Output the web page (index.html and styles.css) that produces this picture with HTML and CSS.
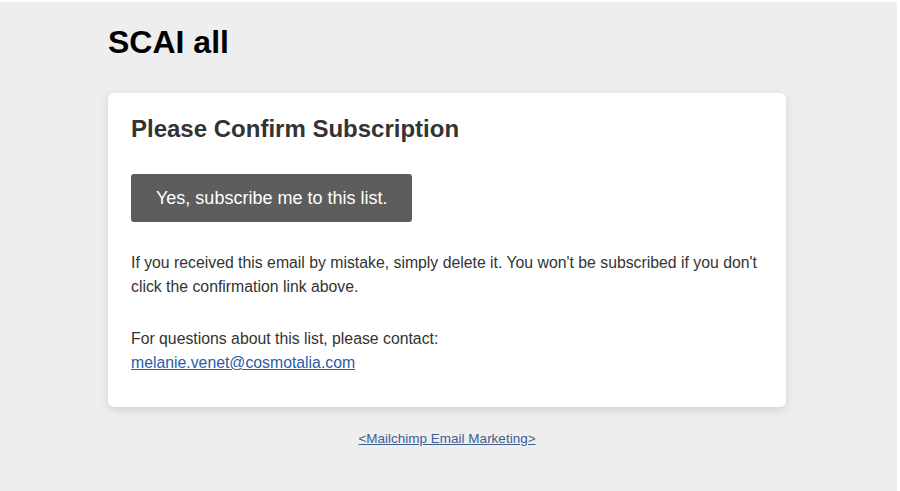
FILE: index.html
```html
<!DOCTYPE html>
<html>
<head>
<meta charset="utf-8">
<link rel="stylesheet" href="styles.css">
</head>
<body>
<div class="page">
  <div class="container">
    <h1 class="site-title">SCAI all</h1>
    <div class="card">
      <h2 class="card-title">Please Confirm Subscription</h2>
      <a class="btn" href="#">Yes, subscribe me to this list.</a>
      <p class="text">If you received this email by mistake, simply delete it. You won't be subscribed if you don't click the confirmation link above.</p>
      <p class="text last">For questions about this list, please contact:<br><a class="mail" href="#">melanie.venet@cosmotalia.com</a></p>
    </div>
    <div class="footer"><a class="footer-link" href="#">&lt;Mailchimp Email Marketing&gt;</a></div>
  </div>
</div>
</body>
</html>
```

FILE: styles.css
```css
html, body {
  margin: 0;
  padding: 0;
  background: #ffffff;
  font-family: "Liberation Sans", Arial, Helvetica, sans-serif;
}
.page {
  background: #eeeeee;
  margin: 2px 3px 0 0;
  height: 489px;
  overflow: hidden;
}
.container {
  width: 678px;
  margin: 0 auto;
  padding-right: 3px;
}
.site-title {
  margin: 0;
  padding-top: 20px;
  font-size: 32px;
  line-height: 40px;
  font-weight: bold;
  color: #000;
}
.card {
  margin-top: 31px;
  background: #fff;
  border-radius: 6px;
  box-shadow: 0 3px 10px rgba(0, 0, 0, 0.12);
  padding: 22px 23px 32px;
}
.card-title {
  margin: 0 0 31px;
  font-size: 24px;
  line-height: 28px;
  font-weight: bold;
  color: #333;
}
.btn {
  display: inline-block;
  background: #5d5d5d;
  color: #fff;
  text-decoration: none;
  font-size: 18px;
  height: 48px;
  line-height: 48px;
  padding: 0 25px;
  border-radius: 3px;
}
.text {
  margin: 29px 0 0;
  font-size: 15.8px;
  line-height: 24px;
  color: #333;
}
.text.last {
  margin-top: 28px;
}
.mail {
  color: #2a5ca8;
  text-decoration: underline;
}
.footer {
  text-align: center;
  padding-top: 24px;
  font-size: 13.5px;
  line-height: 16px;
}
.footer-link {
  color: #3e5f94;
  text-decoration: underline;
}
```
